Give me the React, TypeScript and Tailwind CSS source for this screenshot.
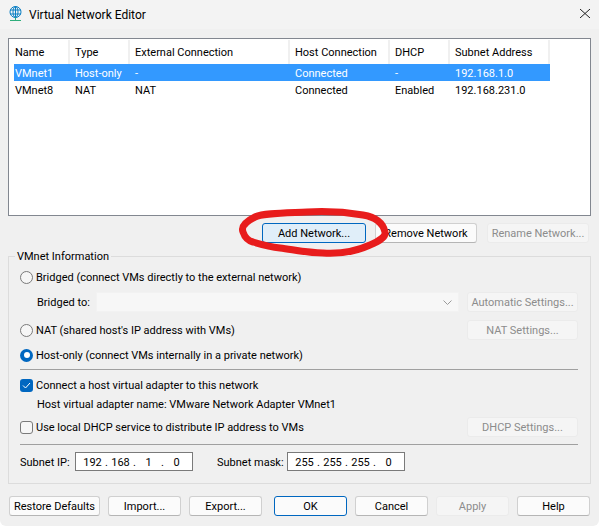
const FONT = "font-['Roboto',sans-serif]";

const COLUMNS = [
  { label: "Name", width: "w-[56px] pl-[1px]" },
  { label: "Type", width: "w-[60px] pl-[5px]" },
  { label: "External Connection", width: "w-[160px] pl-[5px]" },
  { label: "Host Connection", width: "w-[100px] pl-[5px]" },
  { label: "DHCP", width: "w-[60px] pl-[5px]" },
  { label: "Subnet Address", width: "w-[100px] pl-[5px]" },
];

const ROWS = [
  { cells: ["VMnet1", "Host-only", "-", "Connected", "-", "192.168.1.0"], selected: true },
  { cells: ["VMnet8", "NAT", "NAT", "Connected", "Enabled", "192.168.231.0"], selected: false },
];

function Btn({ label, width, disabled, primary, hot }: { label: string; width: string; disabled?: boolean; primary?: boolean; hot?: boolean }) {
  let tone = "border-[#d0d0d0] border-b-[#b5b5b5] bg-[#fbfbfb] text-black";
  if (disabled) tone = "border-[#ebebeb] bg-[#f5f5f5] text-[#8c8c8c]";
  if (primary) tone = "border-[#0067c0] bg-[#fbfbfb] text-black";
  if (hot) tone = "border-[#0067c0] bg-[#e0eef9] text-black";
  return (
    <div className={`flex h-[20px] shrink-0 items-center justify-center whitespace-nowrap rounded-[3px] border pt-[2px] ${width} ${tone}`}>
      {label}
    </div>
  );
}

function Radio({ checked }: { checked?: boolean }) {
  if (checked) {
    return (
      <span className="flex h-[13px] w-[13px] shrink-0 items-center justify-center rounded-full bg-[#0067c0]">
        <span className="h-[6px] w-[6px] rounded-full bg-white" />
      </span>
    );
  }
  return <span className="h-[13px] w-[13px] shrink-0 rounded-full border border-[#7a7a7a] bg-[#f6f6f6]" />;
}

function IpField({ parts }: { parts: string[] }) {
  return (
    <div className="flex h-[19px] w-[118px] items-center border border-[#7a7a7a] bg-white pl-[5px] pt-[2px]">
      {parts.map((p, i) => (
        <span key={i} className="flex items-center">
          <span className="w-[23px] text-center">{p}</span>
          {i < 3 && <span className="w-[5px] text-center">.</span>}
        </span>
      ))}
    </div>
  );
}

export default function App() {
  return (
    <div className={`relative h-[526px] w-[599px] overflow-hidden rounded-b-[6px] bg-[#f0f0f0] text-[11px] leading-[16px] text-black ${FONT}`}>
      {/* Title bar */}
      <div className="flex h-[29px] items-center bg-[#f3f3f3] pl-[9px] pr-[9px]">
        <svg className="mb-[3px]" width="13" height="15" viewBox="0 0 13 15" fill="none" stroke="#0a7fc4" strokeWidth="1">
          <circle cx="6.5" cy="6" r="5.5" />
          <ellipse cx="6.5" cy="6" rx="2.5" ry="5.5" />
          <path d="M1 4h11M1 8h11M6.5 .5v11" />
          <path d="M6.5 11.5v2.5M1 14.5h11" stroke="#2fae7c" />
        </svg>
        <span className="ml-[7px] text-[12px]">Virtual Network Editor</span>
        <svg className="mb-[2px] ml-auto" width="10" height="9" viewBox="0 0 10 9" stroke="#222" strokeWidth="1">
          <path d="M0 0l10 9M10 0l-10 9" />
        </svg>
      </div>

      <div className="px-[8px] pt-[9px]">
        {/* Network list */}
        <div className="h-[178px] border border-[#828790] bg-white pl-[5px] pt-[1px]">
          <div className="flex h-[24px]">
            {COLUMNS.map((c) => (
              <div key={c.label} className={`flex items-center border-r-2 border-[#f0f0f0] pt-[2px] ${c.width}`}>
                {c.label}
              </div>
            ))}
          </div>
          {ROWS.map((r) => (
            <div key={r.cells[0]} className={`flex h-[17px] w-[536px] items-center ${r.selected ? "bg-[#3399ff] text-white" : ""}`}>
              {r.cells.map((cell, i) => (
                <div key={i} className={`pt-[2px] ${COLUMNS[i].width}`}>{cell}</div>
              ))}
            </div>
          ))}
        </div>

        <div className="mt-[7px] flex justify-end pr-[2px]">
          <Btn label="Add Network..." width="w-[104px]" hot />
          <div className="ml-[9px]">
            <Btn label="Remove Network" width="w-[102px]" />
          </div>
          <div className="ml-[10px]">
            <Btn label="Rename Network..." width="w-[102px]" disabled />
          </div>
        </div>

        {/* VMnet Information */}
        <fieldset className="mt-[5px] h-[236px] border border-[#dcdcdc] pl-[11px] pr-[12px]">
          <legend className="-ml-[5px] h-[17px] px-[2px] pt-[1px]">VMnet Information</legend>

          <div className="mt-[4px] flex h-[16px] items-center gap-[3px]">
            <Radio />
            <span className="pt-[2px]">Bridged (connect VMs directly to the external network)</span>
          </div>

          <div className="mt-[7px] flex h-[20px] items-center">
            <span className="w-[58px] shrink-0 whitespace-nowrap pl-[17px] pt-[2px]">Bridged to:</span>
            <div className="ml-[18px] flex h-[20px] w-[363px] items-center justify-end border border-[#f2f2f2] bg-[#f7f7f7] pr-[6px]">
              <svg width="9" height="5" viewBox="0 0 9 5" fill="none" stroke="#9a9a9a">
                <path d="M.5 .5l4 4 4-4" />
              </svg>
            </div>
            <div className="ml-[8px]">
              <Btn label="Automatic Settings..." width="w-[111px]" disabled />
            </div>
          </div>

          <div className="mt-[8px] flex h-[20px] items-center gap-[3px]">
            <Radio />
            <span className="pt-[2px]">NAT (shared host's IP address with VMs)</span>
            <div className="ml-auto">
              <Btn label="NAT Settings..." width="w-[111px]" disabled />
            </div>
          </div>

          <div className="mt-[7px] flex h-[16px] items-center gap-[3px]">
            <Radio checked />
            <span className="pt-[2px]">Host-only (connect VMs internally in a private network)</span>
          </div>

          <div className="mt-[6px] border-t border-[#a0a0a0]" />

          <div className="mt-[7px] flex h-[16px] items-center gap-[3px]">
            <span className="flex h-[13px] w-[13px] shrink-0 items-center justify-center rounded-[3px] bg-[#0067c0]">
              <svg width="9" height="7" viewBox="0 0 9 7" fill="none" stroke="#fff" strokeWidth="1">
                <path d="M1 3.5l2.5 2.5L8 1" />
              </svg>
            </span>
            <span className="pt-[2px]">Connect a host virtual adapter to this network</span>
          </div>

          <div className="mt-[3px] h-[16px] pl-[17px] pt-[1px]">Host virtual adapter name: VMware Network Adapter VMnet1</div>

          <div className="mt-[5px] flex h-[20px] items-center gap-[3px]">
            <span className="h-[13px] w-[13px] shrink-0 rounded-[3px] border border-[#7a7a7a] bg-[#f6f6f6]" />
            <span className="pt-[2px]">Use local DHCP service to distribute IP address to VMs</span>
            <div className="ml-auto">
              <Btn label="DHCP Settings..." width="w-[111px]" disabled />
            </div>
          </div>

          <div className="mt-[7px] border-t border-[#a0a0a0]" />

          <div className="mt-[7px] flex items-center">
            <span className="w-[55px] whitespace-nowrap pt-[2px]">Subnet IP:</span>
            <IpField parts={["192", "168", "1", "0"]} />
            <span className="ml-[24px] w-[70px] whitespace-nowrap pt-[2px]">Subnet mask:</span>
            <IpField parts={["255", "255", "255", "0"]} />
          </div>
        </fieldset>

        <div className="mt-[12px] flex pl-[1px]">
          <Btn label="Restore Defaults" width="w-[91px]" />
          <div className="ml-[8px] flex gap-[8px]">
            <Btn label="Import..." width="w-[73px]" />
            <Btn label="Export..." width="w-[73px]" />
          </div>
          <div className="ml-[12px] flex gap-[8px]">
            <Btn label="OK" width="w-[73px]" primary />
            <Btn label="Cancel" width="w-[73px]" />
            <Btn label="Apply" width="w-[73px]" disabled />
            <Btn label="Help" width="w-[73px]" />
          </div>
        </div>
      </div>

      {/* Red marker circled around the button */}
      <svg className="pointer-events-none absolute left-[235px] top-[205px]" width="160" height="55" viewBox="0 0 160 55" fill="none" stroke="#e81c1c" strokeWidth="7" strokeLinecap="round" strokeLinejoin="round">
        <path d="M72 7C50 8 28 8 20 12C10 17 6 22 8 27C10 33 14 36 18 37C28 40 36 42 45 43C60 45 74 48 88 48C105 49 122 46 135 40C145 36 151 31 150 27C148 18 140 12 128 10C110 7 90 6 72 7Z" />
      </svg>
    </div>
  );
}
